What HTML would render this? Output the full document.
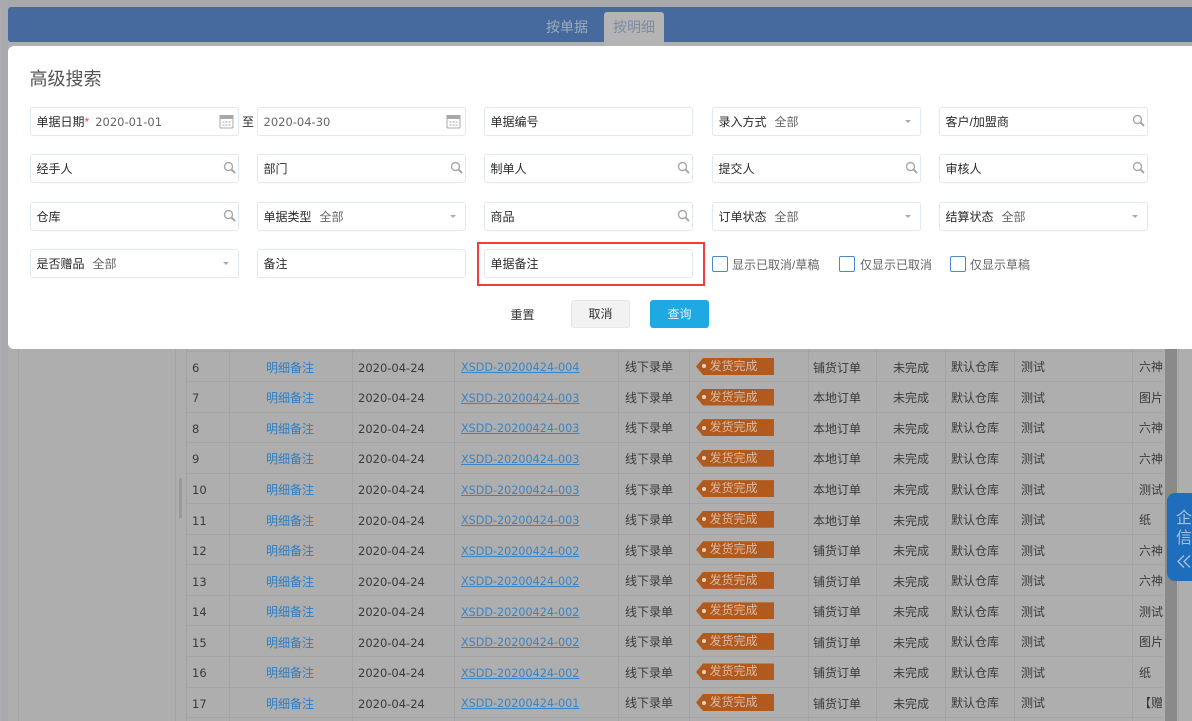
<!DOCTYPE html>
<html lang="zh-CN">
<head>
<meta charset="utf-8">
<title>高级搜索</title>
<style>
html,body{margin:0;padding:0;width:1192px;height:721px;overflow:hidden;background:#aeaeae}
body{position:relative;font-family:"Liberation Sans","Noto Sans CJK SC",sans-serif;font-size:12px;color:#333;filter:blur(.3px)}
.a{position:absolute}
.strip{left:1px;top:0;width:7px;height:721px;background:#a9a9b0}
.top{left:0;top:0;width:1192px;height:7px;background:#a9a9ac}
.hdr{left:8px;top:7px;width:1184px;height:35px;background:#466a9d;border-radius:3px 0 0 3px}
.tab{left:604px;top:12px;width:60px;height:34px;background:#b4b4b4;border-radius:3px 3px 0 0;text-align:center;line-height:31px;font-size:14px;color:#7d8ca1}
.tab0{left:537px;top:12px;width:60px;line-height:31px;text-align:center;font-size:14px;color:#9fabbb}
.vl{width:1px;background:#a5a5a8;top:349px;height:372px}
.split{left:179px;top:478px;width:3px;height:40px;background:#9a9a9c}
.tw{left:186px;top:320px;width:977px;height:401px;overflow:hidden}
table{border-collapse:collapse;table-layout:fixed;width:1010px}
td{height:30.55px;padding:2px 0 0 6px;box-sizing:border-box;border:1px solid #a3a3a8;white-space:nowrap;overflow:hidden;color:#3a3a3a;font-size:12px;line-height:16px}
td:nth-child(1),td:nth-child(3){padding:3px 0 0 5px}
td:nth-child(4){padding-top:3px}
td:nth-child(6){padding-top:0}
td:nth-child(7){padding:3px 0 0 4px}
td:nth-child(9){padding-left:5px}
.c{text-align:center;padding:3px 0 0 0;color:#3d3d3d}
.l{text-align:center;padding:3px 2px 0 0;color:#2d7ec6}
.d{font-family:"DejaVu Sans","Liberation Sans",sans-serif;font-size:11.5px}
.x a{font-family:"DejaVu Sans","Liberation Sans",sans-serif;font-size:11.2px;color:#3a84c5;text-decoration:underline}
.b{display:inline-block;position:relative;top:0;width:78px;height:17px;line-height:17px;background:#b25a1e;color:#d8bba6;padding-left:13.5px;box-sizing:border-box;clip-path:polygon(0 50%,7px 0,100% 0,100% 100%,7px 100%);vertical-align:middle}
.b i{position:absolute;left:6px;top:6.5px;width:4px;height:4px;border-radius:50%;background:#e6d6ca}
.float{left:1167px;top:493px;width:25px;height:88px;background:#1f6dbd;border-radius:8px 0 0 8px;color:#a5c0de;font-size:16px}
.float span{position:absolute;left:9px;white-space:nowrap;line-height:20px}
.modal{left:8px;top:46px;width:1184px;height:303px;background:#fff;border-radius:6px 0 0 6px}
.title{left:29.5px;top:66px;font-size:18px;line-height:26px;color:#555}
.f{height:29px;box-sizing:border-box;border:1px solid #e2e9f4;border-radius:3px;background:#fff;line-height:29px;padding-left:5.5px;color:#2a2a2a;white-space:nowrap;box-shadow:0 0 1px #edf1f7}
.w1{width:209px}
.f em{font-style:normal;color:#666;margin-left:8px}
.f u{text-decoration:none;color:#ef3b5a}
.f .dt{font-family:"DejaVu Sans","Liberation Sans",sans-serif;font-size:11.5px;color:#666}
.f svg{position:absolute}
.car{position:absolute;top:12px;right:9px;width:0;height:0;border-left:3px solid transparent;border-right:3px solid transparent;border-top:3px solid #aaa}
.red{left:477px;top:242px;width:228px;height:44px;box-sizing:border-box;border:2px solid #f43c3c}
.cb{width:16px;height:16px;box-sizing:border-box;border:1.5px solid #4a88c8;border-radius:2px;top:256px;background:#fff}
.ct{top:257px;line-height:17px;color:#666;white-space:nowrap}
.btn{top:300px;width:59px;height:28px;line-height:28px;text-align:center;border-radius:3px;box-sizing:border-box}
</style>
</head>
<body>
<div class="a top"></div>
<div class="a strip"></div>
<div class="a vl" style="left:18px"></div>
<div class="a vl" style="left:175px"></div>
<div class="a split"></div>
<div class="a vl" style="left:1178px"></div>

<div class="a tw">
<table>
<colgroup><col style="width:43px"><col style="width:123px"><col style="width:102px"><col style="width:164px"><col style="width:71px"><col style="width:119px"><col style="width:68px"><col style="width:69px"><col style="width:69px"><col style="width:118px"><col style="width:64px"></colgroup>
<tr><td></td><td></td><td></td><td></td><td></td><td></td><td></td><td></td><td></td><td></td><td></td></tr>
<tr><td class="d">6</td><td class="l">明细备注</td><td class="d">2020-04-24</td><td class="x"><a>XSDD-20200424-004</a></td><td>线下录单</td><td><span class="b"><i></i>发货完成</span></td><td>铺货订单</td><td class="c">未完成</td><td>默认仓库</td><td>测试</td><td>六神</td></tr>
<tr><td class="d">7</td><td class="l">明细备注</td><td class="d">2020-04-24</td><td class="x"><a>XSDD-20200424-003</a></td><td>线下录单</td><td><span class="b"><i></i>发货完成</span></td><td>本地订单</td><td class="c">未完成</td><td>默认仓库</td><td>测试</td><td>图片</td></tr>
<tr><td class="d">8</td><td class="l">明细备注</td><td class="d">2020-04-24</td><td class="x"><a>XSDD-20200424-003</a></td><td>线下录单</td><td><span class="b"><i></i>发货完成</span></td><td>本地订单</td><td class="c">未完成</td><td>默认仓库</td><td>测试</td><td>六神</td></tr>
<tr><td class="d">9</td><td class="l">明细备注</td><td class="d">2020-04-24</td><td class="x"><a>XSDD-20200424-003</a></td><td>线下录单</td><td><span class="b"><i></i>发货完成</span></td><td>本地订单</td><td class="c">未完成</td><td>默认仓库</td><td>测试</td><td>六神</td></tr>
<tr><td class="d">10</td><td class="l">明细备注</td><td class="d">2020-04-24</td><td class="x"><a>XSDD-20200424-003</a></td><td>线下录单</td><td><span class="b"><i></i>发货完成</span></td><td>本地订单</td><td class="c">未完成</td><td>默认仓库</td><td>测试</td><td>测试</td></tr>
<tr><td class="d">11</td><td class="l">明细备注</td><td class="d">2020-04-24</td><td class="x"><a>XSDD-20200424-003</a></td><td>线下录单</td><td><span class="b"><i></i>发货完成</span></td><td>本地订单</td><td class="c">未完成</td><td>默认仓库</td><td>测试</td><td>纸</td></tr>
<tr><td class="d">12</td><td class="l">明细备注</td><td class="d">2020-04-24</td><td class="x"><a>XSDD-20200424-002</a></td><td>线下录单</td><td><span class="b"><i></i>发货完成</span></td><td>铺货订单</td><td class="c">未完成</td><td>默认仓库</td><td>测试</td><td>六神</td></tr>
<tr><td class="d">13</td><td class="l">明细备注</td><td class="d">2020-04-24</td><td class="x"><a>XSDD-20200424-002</a></td><td>线下录单</td><td><span class="b"><i></i>发货完成</span></td><td>铺货订单</td><td class="c">未完成</td><td>默认仓库</td><td>测试</td><td>六神</td></tr>
<tr><td class="d">14</td><td class="l">明细备注</td><td class="d">2020-04-24</td><td class="x"><a>XSDD-20200424-002</a></td><td>线下录单</td><td><span class="b"><i></i>发货完成</span></td><td>铺货订单</td><td class="c">未完成</td><td>默认仓库</td><td>测试</td><td>测试</td></tr>
<tr><td class="d">15</td><td class="l">明细备注</td><td class="d">2020-04-24</td><td class="x"><a>XSDD-20200424-002</a></td><td>线下录单</td><td><span class="b"><i></i>发货完成</span></td><td>铺货订单</td><td class="c">未完成</td><td>默认仓库</td><td>测试</td><td>图片</td></tr>
<tr><td class="d">16</td><td class="l">明细备注</td><td class="d">2020-04-24</td><td class="x"><a>XSDD-20200424-002</a></td><td>线下录单</td><td><span class="b"><i></i>发货完成</span></td><td>铺货订单</td><td class="c">未完成</td><td>默认仓库</td><td>测试</td><td>纸</td></tr>
<tr><td class="d">17</td><td class="l">明细备注</td><td class="d">2020-04-24</td><td class="x"><a>XSDD-20200424-001</a></td><td>线下录单</td><td><span class="b"><i></i>发货完成</span></td><td>铺货订单</td><td class="c">未完成</td><td>默认仓库</td><td>测试</td><td>【赠</td></tr>
<tr><td></td><td></td><td></td><td></td><td></td><td></td><td></td><td></td><td></td><td></td><td></td></tr>
</table>
</div>

<div class="a" style="left:1165px;top:349px;width:12px;height:372px;background:#8a8a8a"></div>
<div class="a float"><span style="top:16px">企</span><span style="top:36px">信</span>
<svg style="position:absolute;left:10px;top:62px" width="15" height="13" viewBox="0 0 15 13" fill="none" stroke="#a5c0de" stroke-width="1.4"><path d="M7 .5L1 6.5l6 6M13 .5L7 6.5l6 6"/></svg></div>

<div class="a hdr"></div>
<div class="a tab0">按单据</div>
<div class="a tab">按明细</div>

<div class="a modal"></div>
<div class="a title">高级搜索</div>

<!-- row 1 -->
<div class="a f w1" style="left:30px;top:107px">单据日期<u>*</u><span class="dt" style="margin-left:6px">2020-01-01</span>
<svg style="left:188px;top:6px" width="15" height="15" viewBox="0 0 15 15" fill="none" stroke="#a8a8a8"><rect x="1" y="1.5" width="13" height="12.5" rx="1"/><path d="M1 1.5h13v3H1z" fill="#a8a8a8"/><path d="M3.5 8h2M6.5 8h2M9.5 8h2M3.5 11h2M6.5 11h2M9.5 11h2"/></svg></div>
<div class="a" style="left:242px;top:114px;line-height:16px">至</div>
<div class="a f w1" style="left:257px;top:107px"><span class="dt">2020-04-30</span>
<svg style="left:188px;top:6px" width="15" height="15" viewBox="0 0 15 15" fill="none" stroke="#a8a8a8"><rect x="1" y="1.5" width="13" height="12.5" rx="1"/><path d="M1 1.5h13v3H1z" fill="#a8a8a8"/><path d="M3.5 8h2M6.5 8h2M9.5 8h2M3.5 11h2M6.5 11h2M9.5 11h2"/></svg></div>
<div class="a f w1" style="left:484px;top:107px">单据编号</div>
<div class="a f w1" style="left:712px;top:107px">录入方式<em>全部</em><span class="car"></span></div>
<div class="a f w1" style="left:939px;top:107px">客户/加盟商
<svg style="left:192px;top:6px" width="13" height="13" viewBox="0 0 13 13" fill="none" stroke="#a8a8a8" stroke-width="1.4"><circle cx="5.5" cy="5.5" r="4"/><path d="M8.5 8.5l3.5 3.5" stroke-width="2"/></svg></div>

<!-- row 2 -->
<div class="a f w1" style="left:30px;top:154px">经手人
<svg style="left:192px;top:6px" width="13" height="13" viewBox="0 0 13 13" fill="none" stroke="#a8a8a8" stroke-width="1.4"><circle cx="5.5" cy="5.5" r="4"/><path d="M8.5 8.5l3.5 3.5" stroke-width="2"/></svg></div>
<div class="a f w1" style="left:257px;top:154px">部门
<svg style="left:192px;top:6px" width="13" height="13" viewBox="0 0 13 13" fill="none" stroke="#a8a8a8" stroke-width="1.4"><circle cx="5.5" cy="5.5" r="4"/><path d="M8.5 8.5l3.5 3.5" stroke-width="2"/></svg></div>
<div class="a f w1" style="left:484px;top:154px">制单人
<svg style="left:192px;top:6px" width="13" height="13" viewBox="0 0 13 13" fill="none" stroke="#a8a8a8" stroke-width="1.4"><circle cx="5.5" cy="5.5" r="4"/><path d="M8.5 8.5l3.5 3.5" stroke-width="2"/></svg></div>
<div class="a f w1" style="left:712px;top:154px">提交人
<svg style="left:192px;top:6px" width="13" height="13" viewBox="0 0 13 13" fill="none" stroke="#a8a8a8" stroke-width="1.4"><circle cx="5.5" cy="5.5" r="4"/><path d="M8.5 8.5l3.5 3.5" stroke-width="2"/></svg></div>
<div class="a f w1" style="left:939px;top:154px">审核人
<svg style="left:192px;top:6px" width="13" height="13" viewBox="0 0 13 13" fill="none" stroke="#a8a8a8" stroke-width="1.4"><circle cx="5.5" cy="5.5" r="4"/><path d="M8.5 8.5l3.5 3.5" stroke-width="2"/></svg></div>

<!-- row 3 -->
<div class="a f w1" style="left:30px;top:201.5px">仓库
<svg style="left:192px;top:6px" width="13" height="13" viewBox="0 0 13 13" fill="none" stroke="#a8a8a8" stroke-width="1.4"><circle cx="5.5" cy="5.5" r="4"/><path d="M8.5 8.5l3.5 3.5" stroke-width="2"/></svg></div>
<div class="a f w1" style="left:257px;top:201.5px">单据类型<em>全部</em><span class="car"></span></div>
<div class="a f w1" style="left:484px;top:201.5px">商品
<svg style="left:192px;top:6px" width="13" height="13" viewBox="0 0 13 13" fill="none" stroke="#a8a8a8" stroke-width="1.4"><circle cx="5.5" cy="5.5" r="4"/><path d="M8.5 8.5l3.5 3.5" stroke-width="2"/></svg></div>
<div class="a f w1" style="left:712px;top:201.5px">订单状态<em>全部</em><span class="car"></span></div>
<div class="a f w1" style="left:939px;top:201.5px">结算状态<em>全部</em><span class="car"></span></div>

<!-- row 4 -->
<div class="a f w1" style="left:30px;top:248.5px">是否赠品<em>全部</em><span class="car"></span></div>
<div class="a f w1" style="left:257px;top:248.5px">备注</div>
<div class="a red"></div>
<div class="a f w1" style="left:484px;top:248.5px">单据备注</div>

<div class="a cb" style="left:712px"></div><div class="a ct" style="left:732px">显示已取消/草稿</div>
<div class="a cb" style="left:839px"></div><div class="a ct" style="left:860px">仅显示已取消</div>
<div class="a cb" style="left:950px"></div><div class="a ct" style="left:970px">仅显示草稿</div>

<div class="a btn" style="left:493px;color:#333;top:301px">重置</div>
<div class="a btn" style="left:571px;background:#f2f2f2;border:1px solid #e6e6e6;color:#333;line-height:26px">取消</div>
<div class="a btn" style="left:650px;background:#1fa9e3;color:#e3f4fb">查询</div>
</body>
</html>
